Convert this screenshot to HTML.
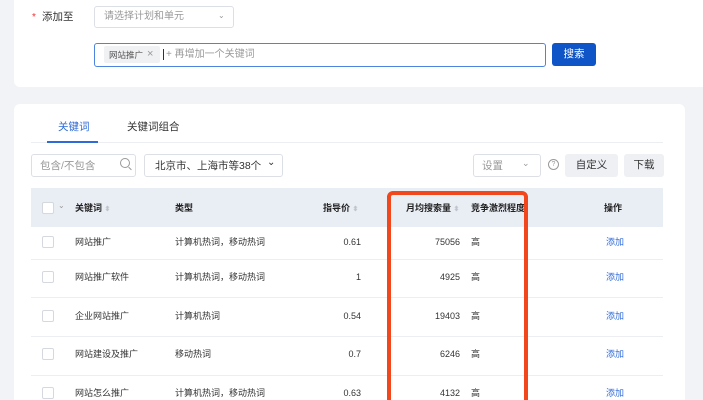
<!DOCTYPE html>
<html><head><meta charset="utf-8"><style>
*{box-sizing:border-box;margin:0;padding:0}
html,body{width:703px;height:400px;overflow:hidden}
body{background:#f1f3f7;font-family:"Liberation Sans","Noto Sans CJK SC",sans-serif;font-size:10px;color:#333;position:relative}
.a{position:absolute;line-height:12px;white-space:nowrap}
.card1{left:14px;top:0;width:689px;height:87px;background:#fff;border-radius:0 0 0 6px}
.card2{left:14px;top:104px;width:671px;height:296px;background:#fff;border-radius:6px 6px 0 0}
.box{border:1px solid #dcdfe6;border-radius:3px;background:#fff}
.ph{color:#999}
.hdr{left:31px;top:188px;width:632px;height:39px;background:#e9edf4}
.line{left:31px;width:632px;height:1px;background:#eceef2}
.cb{width:12px;height:12px;border:1px solid #d5d8de;border-radius:2px;background:#fff}
.sort{color:#c0c4cc;font-size:7px}
.blue{color:#2f6bd8}
.h{font-weight:bold;color:#222}
</style></head><body>
<div class="a card1"></div>
<div class="a card2"></div>
<div class="a" style="left:32px;top:12px;color:#e33;font-size:10px">*</div>
<div class="a" style="left:42px;top:11px;font-size:10.5px">添加至</div>
<div class="a box" style="left:94px;top:6px;width:140px;height:22px"></div>
<div class="a ph" style="left:104px;top:11px;font-size:10px">请选择计划和单元</div>
<div class="a ph" style="left:218px;top:10px;font-size:8px">⌄</div>
<div class="a" style="left:94px;top:43px;width:452px;height:24px;border:1px solid #4d84e0;border-radius:3px;background:#fff"></div>
<div class="a" style="left:104px;top:46px;width:56px;height:17px;background:#f0f1f3;border-radius:2px"></div>
<div class="a" style="left:109px;top:49px;font-size:8.5px;color:#555">网站推广</div>
<div class="a ph" style="left:147px;top:48px;font-size:11px">×</div>
<div class="a" style="left:163px;top:49px;width:1px;height:11px;background:#333"></div>
<div class="a ph" style="left:166px;top:49px;font-size:10px">+ 再增加一个关键词</div>
<div class="a" style="left:552px;top:43px;width:44px;height:23px;background:#0f55c8;border-radius:3px;color:#fff;font-size:10.5px;text-align:center;line-height:23px">搜索</div>

<div class="a blue" style="left:58px;top:121px;font-size:10.5px">关键词</div>
<div class="a" style="left:127px;top:121px;font-size:10.5px">关键词组合</div>
<div class="a line" style="top:142px"></div>
<div class="a" style="left:47px;top:141px;width:51px;height:2px;background:#2f6bd8"></div>

<div class="a box" style="left:31px;top:154px;width:105px;height:23px"></div>
<div class="a ph" style="left:40px;top:160px;font-size:10.5px">包含/不包含</div>
<div class="a" style="left:120px;top:158px;width:10px;height:10px;border:1px solid #999;border-radius:50%"></div>
<div class="a" style="left:128px;top:168px;width:4px;height:1px;background:#999;transform:rotate(45deg)"></div>
<div class="a box" style="left:144px;top:154px;width:139px;height:23px"></div>
<div class="a" style="left:155px;top:160px;font-size:10.5px">北京市、上海市等38个</div>
<div class="a" style="left:267px;top:157px;font-size:10px">⌄</div>
<div class="a box" style="left:473px;top:154px;width:68px;height:23px"></div>
<div class="a ph" style="left:482px;top:160px;font-size:10.5px">设置</div>
<div class="a ph" style="left:522px;top:157px;font-size:9px">⌄</div>
<div class="a" style="left:548px;top:159px;width:11px;height:11px;border:1px solid #999;border-radius:50%;font-size:7px;color:#999;text-align:center;line-height:10px">?</div>
<div class="a" style="left:565px;top:154px;width:53px;height:23px;background:#eef0f4;border-radius:3px;text-align:center;line-height:23px;font-size:10.5px">自定义</div>
<div class="a" style="left:624px;top:154px;width:40px;height:23px;background:#eef0f4;border-radius:3px;text-align:center;line-height:23px;font-size:10.5px">下载</div>

<div class="a hdr"></div>
<div class="a cb" style="left:42px;top:202px"></div>
<div class="a ph" style="left:58px;top:200px;font-size:8px">⌄</div>
<div class="a h" style="left:75px;top:202px;font-size:9px">关键词 <span class="sort">⬍</span></div>
<div class="a h" style="left:175px;top:202px;font-size:9px">类型</div>
<div class="a h" style="left:323px;top:202px;font-size:9px">指导价 <span class="sort">⬍</span></div>
<div class="a h" style="left:406px;top:202px;font-size:9px">月均搜索量 <span class="sort">⬍</span></div>
<div class="a h" style="left:471px;top:202px;font-size:9px">竞争激烈程度</div>
<div class="a h" style="left:604px;top:202px;font-size:9px">操作</div>

<div class="a line" style="top:259px"></div>
<div class="a line" style="top:297px"></div>
<div class="a line" style="top:336px"></div>
<div class="a line" style="top:375px"></div>

<div class="a cb" style="left:42px;top:236px"></div>
<div class="a" style="left:75px;top:236px;font-size:9px">网站推广</div>
<div class="a" style="left:175px;top:236px;font-size:9px">计算机热词，移动热词</div>
<div class="a" style="left:300px;top:236px;width:61px;text-align:right;font-size:9px">0.61</div>
<div class="a" style="left:400px;top:236px;width:60px;text-align:right;font-size:9px">75056</div>
<div class="a" style="left:471px;top:236px;font-size:9px">高</div>
<div class="a blue" style="left:606px;top:236px;font-size:9px">添加</div>

<div class="a cb" style="left:42px;top:271px"></div>
<div class="a" style="left:75px;top:271px;font-size:9px">网站推广软件</div>
<div class="a" style="left:175px;top:271px;font-size:9px">计算机热词，移动热词</div>
<div class="a" style="left:300px;top:271px;width:61px;text-align:right;font-size:9px">1</div>
<div class="a" style="left:400px;top:271px;width:60px;text-align:right;font-size:9px">4925</div>
<div class="a" style="left:471px;top:271px;font-size:9px">高</div>
<div class="a blue" style="left:606px;top:271px;font-size:9px">添加</div>

<div class="a cb" style="left:42px;top:310px"></div>
<div class="a" style="left:75px;top:310px;font-size:9px">企业网站推广</div>
<div class="a" style="left:175px;top:310px;font-size:9px">计算机热词</div>
<div class="a" style="left:300px;top:310px;width:61px;text-align:right;font-size:9px">0.54</div>
<div class="a" style="left:400px;top:310px;width:60px;text-align:right;font-size:9px">19403</div>
<div class="a" style="left:471px;top:310px;font-size:9px">高</div>
<div class="a blue" style="left:606px;top:310px;font-size:9px">添加</div>

<div class="a cb" style="left:42px;top:348px"></div>
<div class="a" style="left:75px;top:348px;font-size:9px">网站建设及推广</div>
<div class="a" style="left:175px;top:348px;font-size:9px">移动热词</div>
<div class="a" style="left:300px;top:348px;width:61px;text-align:right;font-size:9px">0.7</div>
<div class="a" style="left:400px;top:348px;width:60px;text-align:right;font-size:9px">6246</div>
<div class="a" style="left:471px;top:348px;font-size:9px">高</div>
<div class="a blue" style="left:606px;top:348px;font-size:9px">添加</div>

<div class="a cb" style="left:42px;top:387px"></div>
<div class="a" style="left:75px;top:387px;font-size:9px">网站怎么推广</div>
<div class="a" style="left:175px;top:387px;font-size:9px">计算机热词，移动热词</div>
<div class="a" style="left:300px;top:387px;width:61px;text-align:right;font-size:9px">0.63</div>
<div class="a" style="left:400px;top:387px;width:60px;text-align:right;font-size:9px">4132</div>
<div class="a" style="left:471px;top:387px;font-size:9px">高</div>
<div class="a blue" style="left:606px;top:387px;font-size:9px">添加</div>

<div class="a" style="left:387px;top:191px;width:141px;height:215px;border:4px solid #f2461c;border-radius:6px"></div>
</body></html>
